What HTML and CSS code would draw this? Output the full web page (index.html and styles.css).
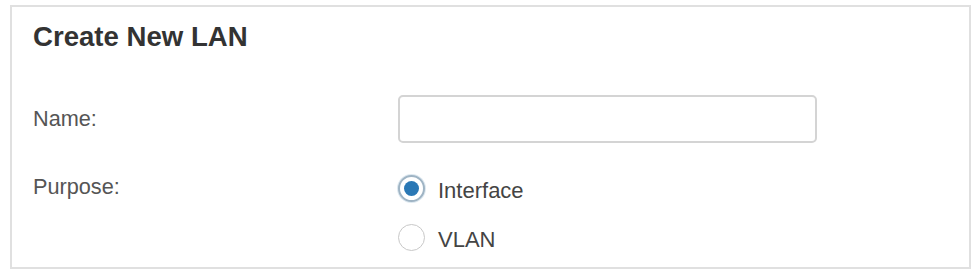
FILE: index.html
```html
<!DOCTYPE html>
<html>
<head>
<meta charset="utf-8">
<link rel="stylesheet" href="styles.css">
</head>
<body>
<div class="panel">
  <h2 class="title">Create New LAN</h2>
  <div class="form">
    <div class="row row-name">
      <label class="label">Name:</label>
      <div class="field"><input class="text-input" type="text"></div>
    </div>
    <div class="row row-purpose">
      <div class="label">Purpose:</div>
      <div class="options">
        <div class="option">
          <span class="radio checked"><span class="dot"></span></span>
          <span class="opt-text">Interface</span>
        </div>
        <div class="option">
          <span class="radio"></span>
          <span class="opt-text">VLAN</span>
        </div>
      </div>
    </div>
  </div>
</div>
</body>
</html>
```
FILE: styles.css
```css
html, body {
  margin: 0;
  padding: 0;
  background: #ffffff;
}
body {
  font-family: "Liberation Sans", Arial, sans-serif;
  width: 976px;
  height: 270px;
  overflow: hidden;
}
.panel {
  box-sizing: border-box;
  margin: 5px 0 0 10px;
  width: 961px;
  height: 264px;
  border: 2px solid #e0e0e0;
  padding: 13px 0 0 21px;
}
.title {
  margin: 0;
  font-size: 27.6px;
  line-height: 33px;
  font-weight: bold;
  color: #333333;
}
.form {
  margin-top: 42px;
}
.row {
  display: grid;
  grid-template-columns: 365px 419px;
}
.row-name {
  align-items: center;
}
.label {
  font-size: 21.7px;
  color: #555555;
}
.text-input {
  box-sizing: border-box;
  display: block;
  width: 419px;
  height: 48px;
  border: 2px solid #d4d4d4;
  border-radius: 5px;
  background: #fff;
  outline: none;
}
.row-purpose {
  margin-top: 31px;
}
.row-purpose .label {
  line-height: 26px;
}
.options {
  display: flex;
  flex-direction: column;
  gap: 22px;
  margin-top: 1px;
}
.option {
  display: flex;
  align-items: center;
  height: 27px;
}
.radio {
  box-sizing: border-box;
  width: 27px;
  height: 27px;
  border-radius: 50%;
  border: 1.5px solid #c8c8c8;
  display: flex;
  align-items: center;
  justify-content: center;
  background: #fff;
}
.radio.checked {
  border: 2px solid #9fb4c4;
  box-shadow: 0 0 0 1px #dde8f0;
}
.dot {
  width: 15px;
  height: 15px;
  border-radius: 50%;
  background: #2a78b5;
}
.opt-text {
  margin-left: 13px;
  font-size: 22px;
  color: #444444;
  position: relative;
  top: 2px;
}
```
